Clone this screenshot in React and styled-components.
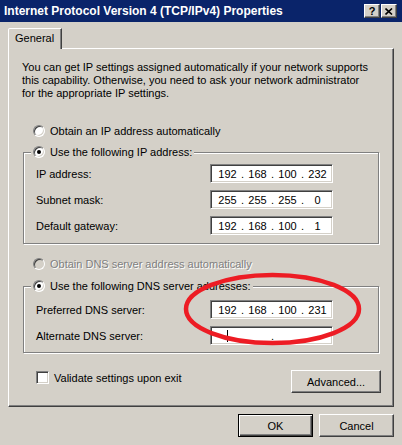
import React from "react";
import styled, { createGlobalStyle } from "styled-components";

const GlobalStyle = createGlobalStyle`
  body {
    margin: 0;
    background: #d4d0c8;
    font-family: "Liberation Sans", Arial, sans-serif;
    font-size: 11px;
  }
`;

const ipRows = [
  { label: "IP address:", octets: ["192", "168", "100", "232"] },
  { label: "Subnet mask:", octets: ["255", "255", "255", "0"] },
  { label: "Default gateway:", octets: ["192", "168", "100", "1"] },
];

const IpField = ({ octets, caret }) => (
  <IpBox>
    {[0, 1, 2, 3].map((i) => (
      <React.Fragment key={i}>
        {i > 0 && <Dot>{octets || i === 2 ? "." : ""}</Dot>}
        <Octet>{octets ? octets[i] : caret && i === 0 ? <Caret /> : ""}</Octet>
      </React.Fragment>
    ))}
  </IpBox>
);

const Radio = ({ checked, disabled, children }) => (
  <RadioRow>
    <RadioDot $checked={checked} $disabled={disabled} />
    <Label $disabled={disabled}>{children}</Label>
  </RadioRow>
);

const App = () => {
  return (
    <>
      <GlobalStyle />
      <Window>
        <TitleBar>
          <Title>Internet Protocol Version 4 (TCP/IPv4) Properties</Title>
          <CaptionButtons>
            <CaptionButton>?</CaptionButton>
            <CaptionButton>
              <svg width="8" height="7" viewBox="0 0 8 7">
                <path d="M0.5 0.5 L7 6.5 M7 0.5 L0.5 6.5" stroke="#000" strokeWidth="1.6" />
              </svg>
            </CaptionButton>
          </CaptionButtons>
        </TitleBar>

        <Body>
          <TabStrip>
            <Tab>General</Tab>
          </TabStrip>
          <Panel>
            <Description>
              You can get IP settings assigned automatically if your network supports
              <br />
              this capability. Otherwise, you need to ask your network administrator
              <br />
              for the appropriate IP settings.
            </Description>

            <Spacer $h={23} />
            <Indent>
              <Radio>Obtain an IP address automatically</Radio>
            </Indent>

            <GroupBox $top={13} $bottom={8}>
              <Legend>
                <Radio checked>Use the following IP address:</Radio>
              </Legend>
              <Rows $top={4}>
                {ipRows.map((r) => (
                  <FieldRow key={r.label}>
                    <FieldLabel>{r.label}</FieldLabel>
                    <IpField octets={r.octets} />
                  </FieldRow>
                ))}
              </Rows>
            </GroupBox>

            <Spacer $h={12} />
            <Indent>
              <Radio disabled>Obtain DNS server address automatically</Radio>
            </Indent>

            <GroupBox $top={14} $bottom={7}>
              <Legend>
                <Radio checked>Use the following DNS server addresses:</Radio>
              </Legend>
              <Rows $top={6}>
                <FieldRow>
                  <FieldLabel>Preferred DNS server:</FieldLabel>
                  <IpField octets={["192", "168", "100", "231"]} />
                </FieldRow>
                <FieldRow>
                  <FieldLabel>Alternate DNS server:</FieldLabel>
                  <IpField caret />
                </FieldRow>
              </Rows>
            </GroupBox>

            <OptionsRow>
              <CheckRow>
                <CheckBox />
                <Label>Validate settings upon exit</Label>
              </CheckRow>
              <Button $w={90}>Advanced...</Button>
            </OptionsRow>
          </Panel>

          <Footer>
            <Button $w={75} $default>OK</Button>
            <Button $w={75}>Cancel</Button>
          </Footer>
        </Body>

        <Annotation width="402" height="445" viewBox="0 0 402 445">
          <ellipse cx="272.5" cy="309" rx="86.5" ry="34" fill="none" stroke="#ed1c24" strokeWidth="4.5" />
        </Annotation>
      </Window>
    </>
  );
};

const Window = styled.div`
  position: relative;
  width: 402px;
  height: 445px;
  overflow: hidden;
  background: #d4d0c8;
  color: #000;
`;

const TitleBar = styled.div`
  height: 22px;
  background: #0a246a;
  display: flex;
  align-items: center;
  justify-content: space-between;
  padding: 0 5px 0 4px;
`;

const Title = styled.span`
  color: #fff;
  font-weight: bold;
  font-size: 12px;
  white-space: nowrap;
`;

const CaptionButtons = styled.div`
  display: flex;
  gap: 1px;
`;

const CaptionButton = styled.div`
  box-sizing: border-box;
  width: 16px;
  height: 14px;
  background: #d4d0c8;
  border: 1px solid;
  border-color: #fff #404040 #404040 #fff;
  box-shadow: inset -1px -1px #808080;
  display: flex;
  align-items: center;
  justify-content: center;
  font-weight: bold;
  font-size: 11px;
  line-height: 1;
`;

const Body = styled.div`
  padding: 6px 8px 0 8px;
`;

const TabStrip = styled.div`
  display: flex;
  height: 20px;
`;

const Tab = styled.div`
  position: relative;
  z-index: 1;
  box-sizing: border-box;
  width: 54px;
  height: 21px;
  padding: 3px 0 0 6px;
  background: #d4d0c8;
  border: 1px solid;
  border-bottom: none;
  border-color: #fff #404040 transparent #fff;
  border-top-left-radius: 2px;
  box-shadow: inset -1px 0 #808080;
`;

const Panel = styled.div`
  box-sizing: border-box;
  width: 386px;
  border: 1px solid;
  border-color: #fff #404040 #404040 #fff;
  box-shadow: inset -1px -1px #808080;
  padding: 12px 14px 13px 14px;
`;

const Description = styled.div`
  line-height: 13px;
  white-space: nowrap;
  margin-left: -1px;
`;

const Spacer = styled.div`
  height: ${(p) => p.$h}px;
`;

const Indent = styled.div`
  padding-left: 10px;
`;

const RadioRow = styled.div`
  display: flex;
  align-items: center;
  gap: 5px;
  height: 16px;
`;

const RadioDot = styled.span`
  position: relative;
  box-sizing: border-box;
  width: 12px;
  height: 12px;
  border-radius: 50%;
  border: 1px solid;
  border-color: #808080 #fff #fff #808080;
  background: ${(p) => (p.$disabled ? "#d4d0c8" : "#fff")};
  box-shadow: inset 1px 1px #404040, inset -1px -1px #d4d0c8;

  &::after {
    content: "";
    display: ${(p) => (p.$checked ? "block" : "none")};
    position: absolute;
    left: 3px;
    top: 3px;
    width: 4px;
    height: 4px;
    border-radius: 50%;
    background: #000;
  }
`;

const Label = styled.span`
  white-space: nowrap;
  color: ${(p) => (p.$disabled ? "#808080" : "#000")};
  text-shadow: ${(p) => (p.$disabled ? "1px 1px #fff" : "none")};
`;

const GroupBox = styled.div`
  margin-top: ${(p) => p.$top}px;
  padding-bottom: ${(p) => p.$bottom}px;
  border: 1px solid #808080;
  box-shadow: 1px 1px #fff, inset 1px 1px #fff;
`;

const Legend = styled.div`
  width: fit-content;
  margin: -9px 0 0 7px;
  padding: 0 2px;
  background: #d4d0c8;
`;

const Rows = styled.div`
  display: flex;
  flex-direction: column;
  gap: 7px;
  margin-top: ${(p) => p.$top}px;
  padding-left: 12px;
`;

const FieldRow = styled.div`
  display: flex;
  align-items: center;
  height: 19px;
`;

const FieldLabel = styled.span`
  width: 174px;
  white-space: nowrap;
`;

const IpBox = styled.div`
  box-sizing: border-box;
  width: 123px;
  height: 19px;
  padding-left: 4px;
  display: flex;
  align-items: center;
  background: #fff;
  border: 1px solid;
  border-color: #808080 #fff #fff #808080;
  box-shadow: inset 1px 1px #404040, inset -1px -1px #d4d0c8;
`;

const Octet = styled.span`
  width: 25px;
  text-align: center;
  display: flex;
  justify-content: center;
`;

const Dot = styled.span`
  width: 5px;
  text-align: center;
`;

const Caret = styled.span`
  display: block;
  width: 1px;
  height: 12px;
  background: #000;
`;

const OptionsRow = styled.div`
  margin: 17px -2px 0 0;
  display: flex;
  justify-content: space-between;
  align-items: flex-start;
`;

const CheckRow = styled.div`
  display: flex;
  align-items: center;
  gap: 5px;
  padding: 1px 0 0 13px;
`;

const CheckBox = styled.span`
  box-sizing: border-box;
  width: 13px;
  height: 13px;
  background: #fff;
  border: 1px solid;
  border-color: #808080 #fff #fff #808080;
  box-shadow: inset 1px 1px #404040, inset -1px -1px #d4d0c8;
`;

const Button = styled.div`
  box-sizing: border-box;
  width: ${(p) => p.$w}px;
  height: 23px;
  display: flex;
  align-items: center;
  justify-content: center;
  background: #d4d0c8;
  border: 1px solid;
  border-color: ${(p) => (p.$default ? "#000" : "#fff #404040 #404040 #fff")};
  box-shadow: ${(p) =>
    p.$default
      ? "inset 1px 1px #fff, inset -1px -1px #404040, inset -2px -2px #808080"
      : "inset -1px -1px #808080"};
`;

const Footer = styled.div`
  display: flex;
  justify-content: flex-end;
  gap: 6px;
  margin-top: 7px;
`;

const Annotation = styled.svg`
  position: absolute;
  left: 0;
  top: 0;
  pointer-events: none;
`;

export default App;
